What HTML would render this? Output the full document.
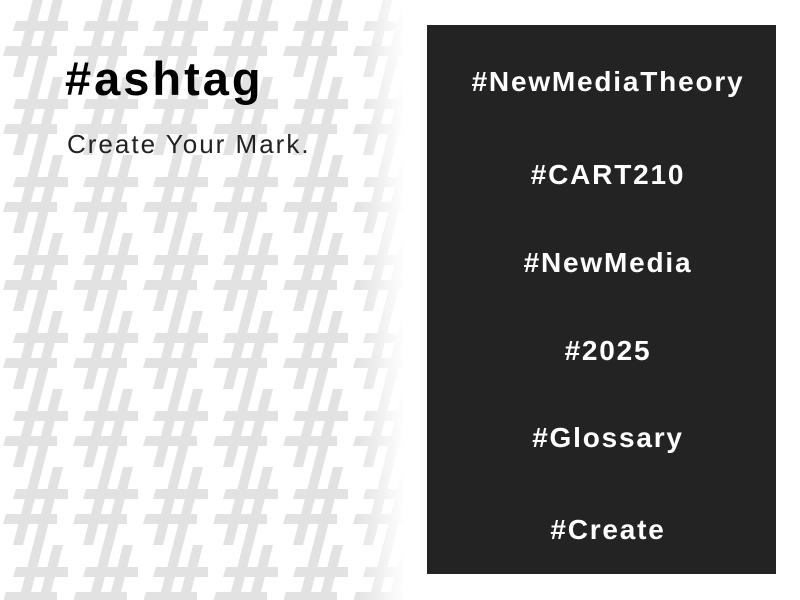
<!DOCTYPE html>
<html><head><meta charset="utf-8"><style>
html,body{margin:0;padding:0;width:800px;height:600px;overflow:hidden;background:#fff;font-family:"Liberation Sans",Arial,sans-serif;}
#bg{position:absolute;left:0;top:0;}
.t{position:absolute;left:0;white-space:nowrap;}
#panel{position:absolute;left:427px;top:25px;width:349px;height:549px;background:#232323;}
.h{position:absolute;left:0;width:362px;text-align:center;color:#fff;font-weight:bold;font-size:28px;line-height:1;letter-spacing:1.8px;}
</style></head><body>
<svg id="bg" width="800" height="600">
<defs>
<pattern id="p" x="0" y="-1" width="70" height="78" patternUnits="userSpaceOnUse">
<g fill="#e2e2e2">
<polygon points="33,0 43,0 23,78 13,78"/>
<polygon points="53,0 63,0 43,78 33,78"/>
<polygon points="16,22 68,22 68,32 13,32"/>
<polygon points="6,47 57,47 57,57 3,57"/>
</g>
</pattern>
<linearGradient id="f" x1="0" x2="1" y1="0" y2="0">
<stop offset="0" stop-color="#fff" stop-opacity="0"/>
<stop offset="1" stop-color="#fff" stop-opacity="1"/>
</linearGradient>
</defs>
<rect x="0" y="0" width="410" height="600" fill="url(#p)"/>
<rect x="355" y="0" width="50" height="600" fill="url(#f)"/>
<rect x="405" y="0" width="20" height="600" fill="#fff"/>
</svg>
<div class="t" style="left:65px;top:55px;font-size:47px;font-weight:bold;color:#000;line-height:1;letter-spacing:3px;">#ashtag</div>
<div class="t" style="left:67px;top:131px;font-size:26px;color:#222;line-height:1;letter-spacing:2px;">Create Your Mark.</div>
<div id="panel">
<div class="h" style="top:43px">#NewMediaTheory</div>
<div class="h" style="top:136px">#CART210</div>
<div class="h" style="top:224px">#NewMedia</div>
<div class="h" style="top:312px">#2025</div>
<div class="h" style="top:399px">#Glossary</div>
<div class="h" style="top:491px">#Create</div>
</div>
</body></html>
